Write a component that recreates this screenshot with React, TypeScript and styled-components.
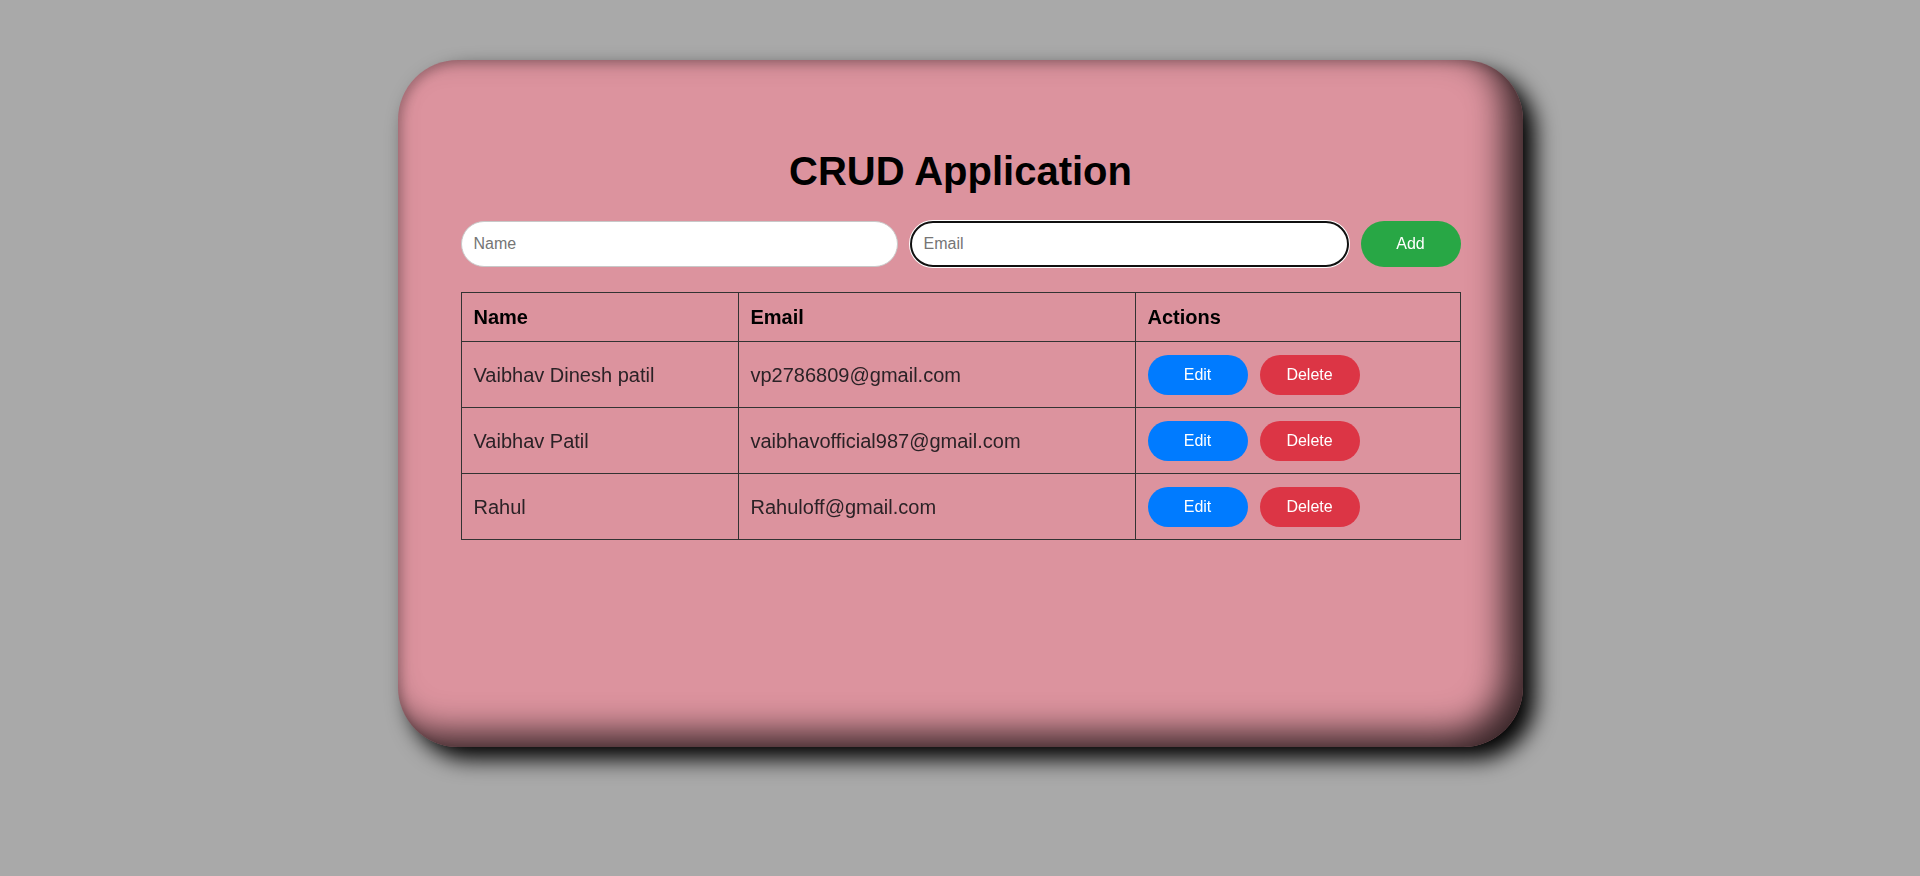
import * as React from 'react';
import styled, { createGlobalStyle } from 'styled-components';

const GlobalStyle = createGlobalStyle`
    html, body {
        margin: 0;
        padding: 0;
        background-color: #a9a9a9;
        font-family: 'Liberation Sans', Arial, sans-serif;
    }
`;

const Page = styled.div`
    min-height: 100vh;
    padding-top: 60px;
    box-sizing: border-box;
`;

const Card = styled.main`
    box-sizing: border-box;
    width: 1125px;
    height: 687px;
    margin: 0 auto;
    padding: 89px 62px 0 63px;
    background-color: #dc939e;
    border-radius: 60px;
    box-shadow:
        12px 12px 22px #000,
        inset -18px -14px 34px rgba(0, 0, 0, 0.75),
        inset 4px 4px 10px rgba(0, 0, 0, 0.18);
`;

const Title = styled.h1`
    margin: 0 0 27px;
    text-align: center;
    font-size: 40px;
    font-weight: 700;
    color: #000;
`;

const Form = styled.div`
    display: flex;
    align-items: stretch;
    gap: 12px;
    margin-bottom: 25px;
`;

const Input = styled.input<{ $focused?: boolean }>`
    flex: 1;
    min-width: 0;
    box-sizing: border-box;
    height: 46px;
    padding: 0 12px;
    font-family: 'Liberation Sans', Arial, sans-serif;
    font-size: 16px;
    color: #000;
    background-color: #fff;
    border-radius: 23px;
    border: ${p => (p.$focused ? '2px solid #101010' : '1px solid #c8c8c8')};
    box-shadow: ${p => (p.$focused ? '0 0 0 1px #fff' : 'none')};
    outline: none;

    &::placeholder {
        color: #757575;
    }
`;

const Button = styled.button<{ $color: string; $w?: number; $h?: number }>`
    width: ${p => p.$w ?? 100}px;
    height: ${p => p.$h ?? 40}px;
    border: none;
    border-radius: 24px;
    background-color: ${p => p.$color};
    color: #fff;
    font-family: 'Liberation Sans', Arial, sans-serif;
    font-size: 16px;
    cursor: pointer;
    padding: 0;
`;

const Table = styled.table`
    width: 100%;
    border-collapse: collapse;
    table-layout: fixed;
    font-size: 20px;
`;

const Th = styled.th<{ $w?: number }>`
    box-sizing: border-box;
    width: ${p => (p.$w ? `${p.$w}px` : 'auto')};
    text-align: left;
    font-weight: 700;
    color: #000;
    padding: 12.5px 12px;
    line-height: 23px;
    border: 1px solid #333;
`;

const Td = styled.td`
    padding: 13px 12px 12px;
    line-height: 23px;
    color: #2b2226;
    border: 1px solid #333;
    vertical-align: middle;
`;

const Actions = styled.div`
    display: flex;
    gap: 12px;
`;

interface User {
    name: string;
    email: string;
}

const users: User[] = [
    { name: 'Vaibhav Dinesh patil', email: 'vp2786809@gmail.com' },
    { name: 'Vaibhav Patil', email: 'vaibhavofficial987@gmail.com' },
    { name: 'Rahul', email: 'Rahuloff@gmail.com' },
];

function App(): React.ReactElement {
    const [name, setName] = React.useState<string>('');
    const [email, setEmail] = React.useState<string>('');

    return (
        <Page>
            <GlobalStyle />
            <Card>
                <Title>CRUD Application</Title>
                <Form>
                    <Input placeholder="Name" value={name} onChange={e => setName(e.target.value)} />
                    <Input
                        $focused
                        autoFocus
                        placeholder="Email"
                        value={email}
                        onChange={e => setEmail(e.target.value)}
                    />
                    <Button $color="#28a745" $h={46}>Add</Button>
                </Form>
                <Table>
                    <thead>
                        <tr>
                            <Th $w={277}>Name</Th>
                            <Th $w={397}>Email</Th>
                            <Th>Actions</Th>
                        </tr>
                    </thead>
                    <tbody>
                        {users.map(u => (
                            <tr key={u.email}>
                                <Td>{u.name}</Td>
                                <Td>{u.email}</Td>
                                <Td>
                                    <Actions>
                                        <Button $color="#007bff">Edit</Button>
                                        <Button $color="#dc3545">Delete</Button>
                                    </Actions>
                                </Td>
                            </tr>
                        ))}
                    </tbody>
                </Table>
            </Card>
        </Page>
    );
}

export default App;
